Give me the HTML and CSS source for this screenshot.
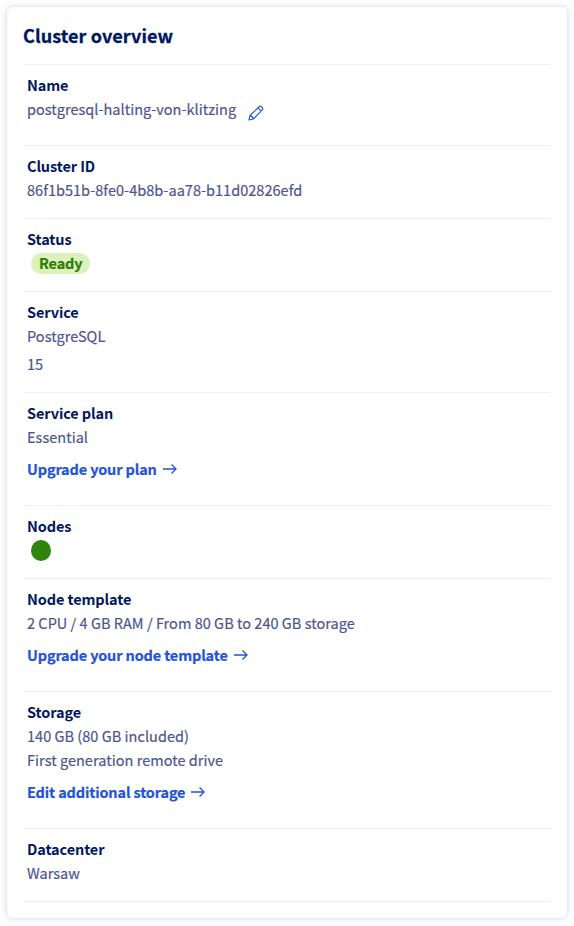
FILE: index.html
```html
<!DOCTYPE html>
<html lang="en">
<head>
<meta charset="utf-8">
<title>Cluster overview</title>
<link rel="stylesheet" href="styles.css">
</head>
<body>
<main class="card">
  <h1 class="title">Cluster overview</h1>
  <dl class="list">
    <div class="row">
      <dt>Name</dt>
      <dd class="name"><span>postgresql-halting-von-klitzing</span>
        <svg class="pencil" viewBox="0 0 16 16"><path d="M1 15l1-4.300L11.300 1.500q.9-.8 1.800 0l1.400 1.400q.8.9 0 1.800L5.300 14zM10 2.900l3.200 3.200M2 10.900q2.700.1 3.200 3.100"/></svg>
      </dd>
    </div>
    <div class="row">
      <dt>Cluster ID</dt>
      <dd class="cluster-id">86f1b51b-8fe0-4b8b-aa78-b11d02826efd</dd>
    </div>
    <div class="row">
      <dt>Status</dt>
      <dd class="status"><span class="badge">Ready</span></dd>
    </div>
    <div class="row">
      <dt>Service</dt>
      <dd>PostgreSQL</dd>
      <dd class="version">15</dd>
    </div>
    <div class="row">
      <dt>Service plan</dt>
      <dd>Essential</dd>
      <dd class="action"><a>Upgrade your plan</a><svg class="arrow" viewBox="0 0 14 12"><path d="M0 6h13M8.500 1.500L13 6l-4.500 4.500"/></svg></dd>
    </div>
    <div class="row">
      <dt>Nodes</dt>
      <dd class="status"><span class="node"></span></dd>
    </div>
    <div class="row">
      <dt>Node template</dt>
      <dd>2 CPU / 4 GB RAM / From 80 GB to 240 GB storage</dd>
      <dd class="action"><a>Upgrade your node template</a><svg class="arrow" viewBox="0 0 14 12"><path d="M0 6h13M8.500 1.500L13 6l-4.500 4.500"/></svg></dd>
    </div>
    <div class="row">
      <dt>Storage</dt>
      <dd>140 GB (80 GB included)</dd>
      <dd>First generation remote drive</dd>
      <dd class="action"><a>Edit additional storage</a><svg class="arrow" viewBox="0 0 14 12"><path d="M0 6h13M8.500 1.500L13 6l-4.500 4.500"/></svg></dd>
    </div>
    <div class="row">
      <dt>Datacenter</dt>
      <dd>Warsaw</dd>
    </div>
  </dl>
</main>
</body>
</html>
```
FILE: styles.css
```css
* { box-sizing: border-box; }
body {
  margin: 0;
  padding: 7px;
  background: #fff;
  color: #4d5592;
  font: 14.5px/24px "Noto Sans CJK SC", "Noto Sans", sans-serif;
}
.card {
  width: 560px;
  height: 911px;
  padding: 16px;
  border-radius: 6px;
  background: #fff;
  box-shadow: 0 0 6px rgba(0, 0, 200, 0.2);
}
.title {
  margin: 0;
  height: 41px;
  color: #00185e;
  font-size: 18px;
  line-height: 25px;
  font-weight: 700;
  letter-spacing: 0.08px;
  -webkit-text-stroke: 0.3px currentColor;
}
.list { margin: 0; border-top: 1px solid #f0f0f2; }
.row { padding: 8px 4px 16px; border-bottom: 1px solid #f0f0f2; }
dt { color: #00185e; font-weight: 700; letter-spacing: -0.11px; }
dd {
  margin: 0;
  white-space: nowrap;
  letter-spacing: 0.03px;
  -webkit-text-stroke: 0.2px currentColor;
}
.name { display: flex; gap: 12px; height: 32px; }
.pencil {
  width: 16px;
  height: 16px;
  margin-top: 8px;
  fill: none;
  stroke: #2859d0;
  stroke-width: 1.2;
  stroke-linejoin: round;
}
.version { margin-top: 4px; }
.status { display: flex; align-items: center; height: 24px; padding-left: 4px; }
.badge {
  height: 21px;
  padding: 0 8px;
  border-radius: 11px;
  background: #ddf1bd;
  color: #2b8000;
  font-weight: 700;
  line-height: 20px;
  letter-spacing: -0.15px;
}
.node { width: 20px; height: 21px; border-radius: 50%; background: #2f850b; }
.action {
  display: flex;
  align-items: center;
  gap: 6px;
  height: 40px;
  color: #2354d6;
  font-weight: 700;
  letter-spacing: -0.15px;
}
.arrow { width: 14px; height: 12px; fill: none; stroke: currentColor; stroke-width: 1.3; }
```
